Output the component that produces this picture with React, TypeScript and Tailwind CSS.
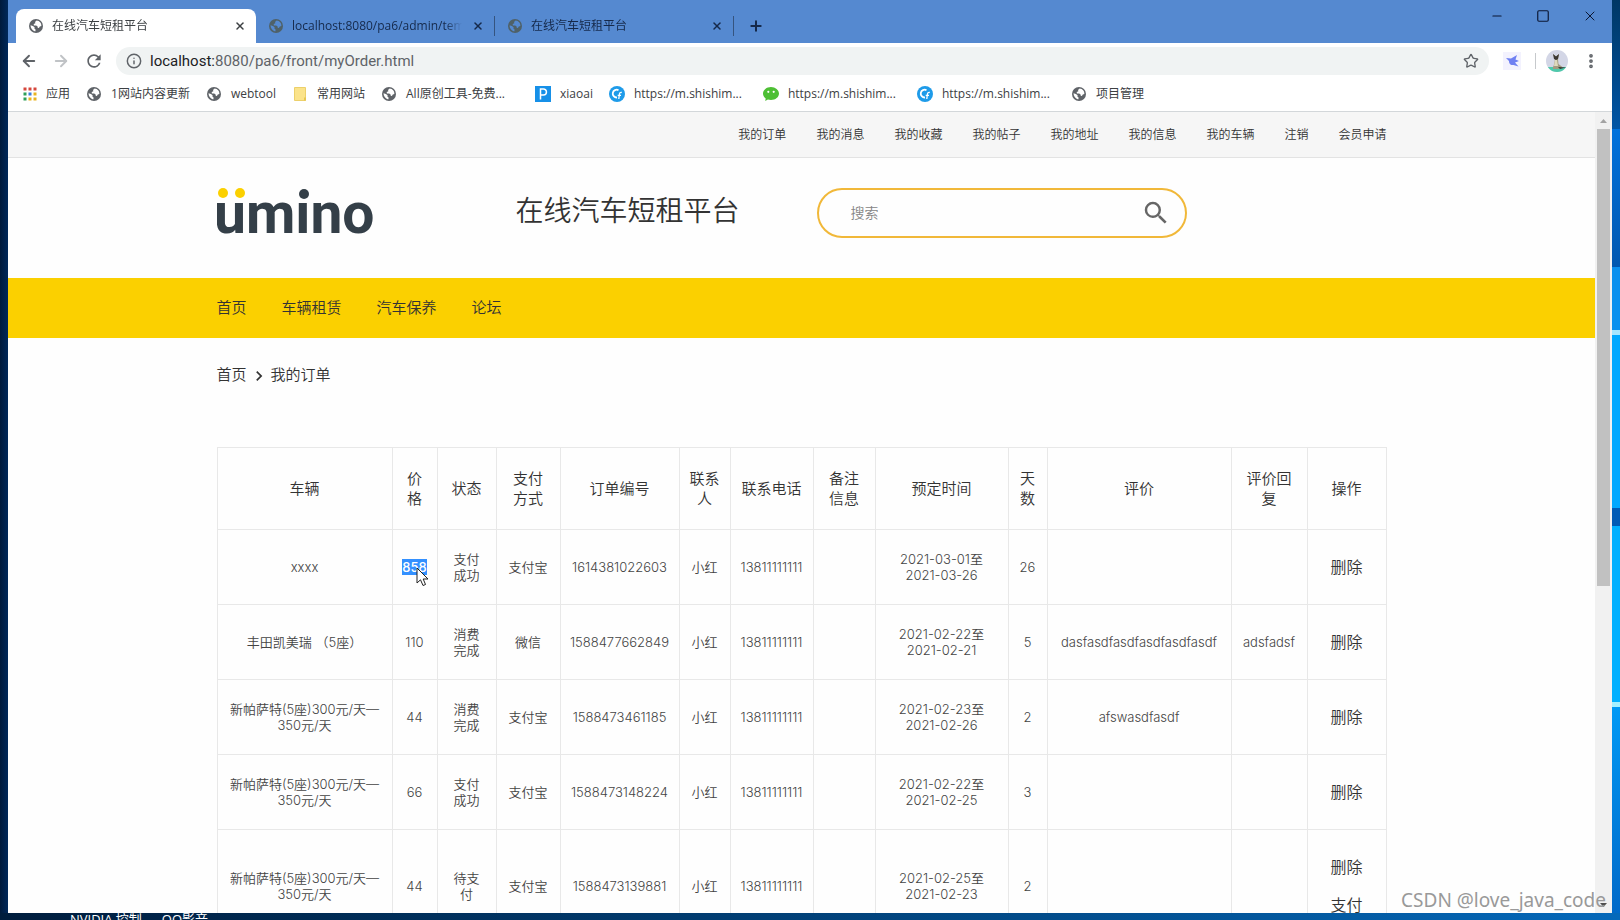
import type { ReactNode } from 'react';
import { ArrowLeft, ArrowRight, EllipsisVertical, Info, Minus, Plus, Square, Star, X } from 'lucide-react';
import { MdChevronRight, MdRefresh, MdSearch } from 'react-icons/md';

interface Bookmark {
    label: string;
    icon: ReactNode;
    wide?: boolean;
}

interface Order {
    car: string;
    price: string;
    status: string;
    payment: string;
    orderNo: string;
    contact: string;
    phone: string;
    remark: string;
    dates: [string, string];
    days: string;
    review: string;
    reply: string;
    actions: string[];
    selected?: boolean;
}

const topLinks = ['我的订单', '我的消息', '我的收藏', '我的帖子', '我的地址', '我的信息', '我的车辆', '注销', '会员申请'];

const navLinks = ['首页', '车辆租赁', '汽车保养', '论坛'];

const columns = [
    { title: '车辆', width: 'w-[175px]' },
    { title: '价格', width: 'w-[45px]' },
    { title: '状态', width: 'w-[59px]' },
    { title: '支付方式', width: 'w-[64px]' },
    { title: '订单编号', width: 'w-[119px]' },
    { title: '联系人', width: 'w-[51px]' },
    { title: '联系电话', width: 'w-[83px]' },
    { title: '备注信息', width: 'w-[62px]' },
    { title: '预定时间', width: 'w-[133px]' },
    { title: '天数', width: 'w-[39px]' },
    { title: '评价', width: 'w-[184px]' },
    { title: '评价回复', width: 'w-[76px]' },
    { title: '操作', width: 'w-[79px]' },
];

const passat = '新帕萨特(5座)300元/天—350元/天';

const orders: Order[] = [
    { car: 'xxxx', price: '858', status: '支付成功', payment: '支付宝', orderNo: '1614381022603', contact: '小红', phone: '13811111111', remark: '', dates: ['2021-03-01', '2021-03-26'], days: '26', review: '', reply: '', actions: ['删除'], selected: true },
    { car: '丰田凯美瑞 （5座）', price: '110', status: '消费完成', payment: '微信', orderNo: '1588477662849', contact: '小红', phone: '13811111111', remark: '', dates: ['2021-02-22', '2021-02-21'], days: '5', review: 'dasfasdfasdfasdfasdfasdf', reply: 'adsfadsf', actions: ['删除'] },
    { car: passat, price: '44', status: '消费完成', payment: '支付宝', orderNo: '1588473461185', contact: '小红', phone: '13811111111', remark: '', dates: ['2021-02-23', '2021-02-26'], days: '2', review: 'afswasdfasdf', reply: '', actions: ['删除'] },
    { car: passat, price: '66', status: '支付成功', payment: '支付宝', orderNo: '1588473148224', contact: '小红', phone: '13811111111', remark: '', dates: ['2021-02-22', '2021-02-25'], days: '3', review: '', reply: '', actions: ['删除'] },
    { car: passat, price: '44', status: '待支付', payment: '支付宝', orderNo: '1588473139881', contact: '小红', phone: '13811111111', remark: '', dates: ['2021-02-25', '2021-02-23'], days: '2', review: '', reply: '', actions: ['删除', '支付'] },
];

function Globe({ dim = false }: { dim?: boolean }) {
    return (
        <svg viewBox="0 0 16 16" className="size-4 shrink-0" aria-hidden="true">
            <circle cx="8" cy="8" r="7" fill={dim ? '#4f6168' : '#5f6368'} />
            <path
                d="M8.6 2.6 7 4l.4 1.2-1.7.9.2 1.3h2.3l1.4 1 .1 1.4 1.2.2.9-1.6 1.6-.3c.1-3.2-1.7-5.3-4.8-5.5ZM2.5 7.3c0 2.9 1.7 5.2 4.7 6.1l.5-1.6-1.3-1.4.2-1.2-1.7-1.1-2.4-.8Z"
                fill={dim ? '#5589d0' : '#ffffff'}
            />
        </svg>
    );
}

function AppsGrid() {
    const colors = ['#d5473c', '#d5473c', '#d5473c', '#2f9e58', '#3b7ddd', '#e9b320', '#2f9e58', '#e9b320', '#e9b320'];
    return (
        <svg viewBox="0 0 14 14" className="size-3.5 shrink-0" aria-hidden="true">
            {colors.map((color, i) => (
                <rect key={i} x={(i % 3) * 5 + 0.5} y={Math.floor(i / 3) * 5 + 0.5} width="3" height="3" fill={color} />
            ))}
        </svg>
    );
}

function Folder() {
    return (
        <svg viewBox="0 0 16 16" className="size-4 shrink-0" aria-hidden="true">
            <path d="M2.5 1.5h11v13h-11z" fill="#fbe38a" stroke="#ecd06b" />
            <path d="M12 11.5h2v3h-2z" fill="#e8c64f" />
        </svg>
    );
}

function SquareP() {
    return (
        <svg viewBox="0 0 16 16" className="size-4 shrink-0" aria-hidden="true">
            <path d="M0 0h16v16H0z" fill="#1690e8" />
            <path d="M5.5 13.5V3h3a2.9 2.9 0 0 1 0 5.9h-3" fill="none" stroke="#fff" strokeWidth="1.5" />
        </svg>
    );
}

function RoundC() {
    return (
        <svg viewBox="0 0 16 16" className="size-4 shrink-0" aria-hidden="true">
            <circle cx="8" cy="8" r="8" fill="#1e9be9" />
            <path d="M9.5 4.2A3.9 3.9 0 1 0 8 11.5" fill="none" stroke="#fff" strokeWidth="1.8" />
            <path d="M12.8 6.5c-2-.3-2.3.6-2.5 2.5L9.8 13M8.7 9.3h3.3" fill="none" stroke="#fff" strokeWidth="1.3" />
        </svg>
    );
}

function ChatBubble() {
    return (
        <svg viewBox="0 0 16 16" className="size-4 shrink-0" aria-hidden="true">
            <path d="M8 1C3.6 1 0 3.9 0 7.6c0 2 1.1 3.7 2.7 4.9L2.2 15l2.7-1.4c1 .3 2 .5 3.1.5 4.4 0 8-2.9 8-6.5S12.4 1 8 1Z" fill="#4dbf34" />
            <circle cx="5.3" cy="5.8" r="1.1" fill="#fff" />
            <circle cx="10.7" cy="5.8" r="1.1" fill="#fff" />
        </svg>
    );
}

function Bird() {
    return (
        <svg viewBox="0 0 18 18" className="size-[18px]" aria-hidden="true">
            <path d="M0 0h18v18H0z" fill="#f3f2fe" />
            <path d="m3 6 5 .5L14 3l-1.5 4.5L16 9l-4 1.5 3.5 4-5-1.5C7 13.5 6 11 6 9Z" fill="#6f80f2" />
        </svg>
    );
}

function Avatar() {
    return (
        <svg viewBox="0 0 22 22" className="size-[22px]" aria-hidden="true">
            <clipPath id="avatar-clip">
                <circle cx="11" cy="11" r="11" />
            </clipPath>
            <g clipPath="url(#avatar-clip)">
                <path d="M0 0h22v22H0z" fill="#d3d6e6" />
                <path d="M0 17h22v5H0z" fill="#4fc9ab" />
                <path d="M7 17c1-1 1.5-5 2-8L7 4l3 2.5L13 4l-1 5 .5 5 4.5 3.5-5 1.5H7Z" fill="#a39b80" />
                <path d="m7 4 3 2.5L13 4l-1 5-2 1-2-1ZM12 17l8 .5-6 1.5Z" fill="#3a3733" />
                <path d="M9 10h2l1 6H8Z" fill="#ded9bd" />
            </g>
        </svg>
    );
}

function Logo() {
    return (
        <svg width="158" height="56" viewBox="0 0 158 56" role="img" aria-label="ümino">
            {/* The letters fade out above the x-height, the round dots are drawn on their own */}
            <linearGradient id="logo-fill" gradientUnits="userSpaceOnUse" x1="0" y1="0" x2="0" y2="56">
                <stop offset="0.22" stopColor="#343f48" stopOpacity="0" />
                <stop offset="0.22" stopColor="#343f48" />
            </linearGradient>
            <text x="-3" y="45" fontFamily="Roboto, sans-serif" fontSize="57" fontWeight="700" fill="url(#logo-fill)">
                ümino
            </text>
            <circle cx="6" cy="5" r="5" fill="#fbd000" />
            <circle cx="23" cy="5" r="5" fill="#fbd000" />
            <circle cx="87" cy="6" r="5" fill="#343f48" />
        </svg>
    );
}

function Pointer() {
    return (
        <svg viewBox="0 0 14 20" className="absolute top-2 left-3.5 h-5 w-3.5" aria-hidden="true">
            <path d="M1 1v15l3.5-3.2L7 18.5l2.5-1L7.2 12H12Z" fill="#fff" stroke="#222" />
        </svg>
    );
}

const bookmarks: Bookmark[] = [
    { label: '应用', icon: <AppsGrid /> },
    { label: '1网站内容更新', icon: <Globe /> },
    { label: 'webtool', icon: <Globe /> },
    { label: '常用网站', icon: <Folder /> },
    { label: 'All原创工具-免费...', icon: <Globe />, wide: true },
    { label: 'xiaoai', icon: <SquareP /> },
    { label: 'https://m.shishim...', icon: <RoundC />, wide: true },
    { label: 'https://m.shishim...', icon: <ChatBubble />, wide: true },
    { label: 'https://m.shishim...', icon: <RoundC />, wide: true },
    { label: '项目管理', icon: <Globe /> },
];

function BrowserTab({ title, active = false }: { title: string; active?: boolean }) {
    return (
        <div
            className={`flex h-[34px] items-center gap-2 pr-2 pl-3 text-xs ${active
                ? 'w-60 rounded-t-lg bg-white text-[#3c4043]'
                : 'w-[238px] text-[#15294a]'
                }`}
        >
            <Globe dim={!active} />
            <span className="flex-1 overflow-hidden mask-r-from-90% whitespace-nowrap">{title}</span>
            <button type="button" aria-label="关闭标签页" className="p-0.5">
                <X className="size-3" strokeWidth={3} />
            </button>
        </div>
    );
}

function BrowserChrome() {
    return (
        <header className="shrink-0 border-b border-[#d3d7da] bg-white font-['Open_Sans','Noto_Sans_CJK_SC',sans-serif]">
            <div className="flex h-[43px] items-end justify-between bg-[#5589d0]">
                <div className="flex items-center pl-2">
                    <BrowserTab title="在线汽车短租平台" active />
                    <div className="flex items-center">
                        <BrowserTab title="localhost:8080/pa6/admin/tem" />
                        <span className="h-5 w-px bg-[#35547f]" />
                        <BrowserTab title="在线汽车短租平台" />
                        <span className="h-5 w-px bg-[#35547f]" />
                    </div>
                    <button type="button" aria-label="新标签页" className="ml-3.5 text-[#15294a]">
                        <Plus className="size-4" strokeWidth={3} />
                    </button>
                </div>
                <div className="flex gap-8 self-start pt-2 pr-3.5 text-[#0b1733]">
                    <button type="button" aria-label="最小化"><Minus className="size-3.5" strokeWidth={2} /></button>
                    <button type="button" aria-label="最大化"><Square className="size-3.5" strokeWidth={2} /></button>
                    <button type="button" aria-label="关闭"><X className="size-4" strokeWidth={1.5} /></button>
                </div>
            </div>

            {/* Address bar */}
            <div className="flex h-9 items-center text-[#5f6368]">
                <div className="flex items-center gap-3.5 px-3">
                    <button type="button" aria-label="后退"><ArrowLeft className="size-[18px]" strokeWidth={2.5} /></button>
                    <button type="button" aria-label="前进" className="text-[#c0c3c6]"><ArrowRight className="size-[18px]" strokeWidth={2.5} /></button>
                    <button type="button" aria-label="重新加载"><MdRefresh className="size-5" /></button>
                </div>
                <div className="flex h-7 flex-1 items-center gap-2 rounded-full bg-[#f0f3f3] px-2.5">
                    <Info className="size-4" strokeWidth={2.2} />
                    <a href="#" className="flex-1 font-[Roboto,sans-serif] text-[15px]">
                        <span className="text-[#202124]">localhost:</span>8080/pa6/front/myOrder.html
                    </a>
                    <button type="button" aria-label="为此网页添加书签"><Star className="size-4" /></button>
                </div>
                <div className="flex items-center gap-2.5 pr-3 pl-3.5">
                    <Bird />
                    <span className="ml-1 h-4 w-px bg-[#c6c9cc]" />
                    <Avatar />
                    <button type="button" aria-label="自定义及控制" className="ml-1"><EllipsisVertical className="size-[18px]" strokeWidth={3} /></button>
                </div>
            </div>

            {/* Bookmarks bar */}
            <nav className="flex h-8 items-center gap-4 px-[15px] pb-0.5 text-xs text-[#3c4043]">
                {bookmarks.map((bookmark, i) => (
                    <a key={i} href="#" className="flex items-center gap-[9px] whitespace-nowrap">
                        {bookmark.icon}
                        <span className={bookmark.wide ? 'w-[113px]' : ''}>{bookmark.label}</span>
                    </a>
                ))}
            </nav>
        </header>
    );
}

function OrderRow({ order }: { order: Order }) {
    const cell = 'border border-[#e8e8e8] px-2';
    return (
        <tr className="h-[75px]">
            <td className={cell}>{order.car}</td>
            <td className={cell}>
                {order.selected ? (
                    <span className="relative inline-block bg-[#3390ff] font-medium text-white">
                        {order.price}
                        <Pointer />
                    </span>
                ) : order.price}
            </td>
            <td className={`${cell} px-4`}>{order.status}</td>
            <td className={cell}>{order.payment}</td>
            <td className={cell}>{order.orderNo}</td>
            <td className={cell}>{order.contact}</td>
            <td className={cell}>{order.phone}</td>
            <td className={cell}>{order.remark}</td>
            <td className={cell}>
                {order.dates[0]}至<br />{order.dates[1]}
            </td>
            <td className={cell}>{order.days}</td>
            <td className={cell}>{order.review}</td>
            <td className={cell}>{order.reply}</td>
            <td className={`${cell} py-[18px] text-base text-[#333]`}>
                {order.actions.map(action => (
                    <a key={action} href="#" className="block leading-[38px]">{action}</a>
                ))}
            </td>
        </tr>
    );
}

function Scrollbar() {
    return (
        <div className="flex w-[17px] shrink-0 flex-col items-center bg-[#f1f1f1]" aria-hidden="true">
            <svg viewBox="0 0 17 17" className="size-[17px]"><path d="m5 11 3.5-4 3.5 4Z" fill="#a3a3a3" /></svg>
            <div className="h-[57%] w-[13px] bg-[#c1c1c1]" />
            <svg viewBox="0 0 17 17" className="mt-auto size-[17px]"><path d="m5 7 3.5 4L12 7Z" fill="#505050" /></svg>
        </div>
    );
}

function SitePage() {
    return (
        <main className="min-w-0 flex-1 overflow-hidden bg-[#fefefe] font-[Inter,'Noto_Sans_CJK_SC',sans-serif] font-[350] text-[#333]">
            <div className="border-b border-[#e3e3e3] bg-[#f6f6f6]">
                <nav className="mx-auto flex h-[45px] max-w-[1170px] items-center justify-end gap-[30px] text-xs">
                    {topLinks.map(link => <a key={link} href="#">{link}</a>)}
                </nav>
            </div>

            <div className="mx-auto flex h-[120px] max-w-[1170px] items-start pt-[30px]">
                <a href="#" className="w-[299px]"><Logo /></a>
                <h1 className="w-[301px] text-[28px] leading-[46px]">在线汽车短租平台</h1>
                <form className="flex h-[50px] w-[370px] items-center rounded-full border-2 border-[#f1b839] pr-3.5 pl-8" onSubmit={e => e.preventDefault()}>
                    <input type="text" aria-label="搜索" placeholder="搜索" className="min-w-0 flex-1 text-sm outline-none placeholder:text-[#858585]" />
                    <button type="submit" aria-label="搜索"><MdSearch className="size-[30px] text-[#666]" /></button>
                </form>
            </div>

            <div className="bg-[#fbd000]">
                <nav className="mx-auto flex h-[60px] max-w-[1170px] items-center gap-[35px] text-[15px]">
                    {navLinks.map(link => <a key={link} href="#">{link}</a>)}
                </nav>
            </div>

            <div className="mx-auto max-w-[1170px]">
                <div className="flex h-[109px] items-start gap-0.5 pt-[26px] text-[15px]">
                    <a href="#">首页</a>
                    <MdChevronRight className="mt-0.5 size-5" />
                    <span>我的订单</span>
                </div>

                <table className="w-full table-fixed border-collapse text-center text-[13px] leading-4 text-[#444]">
                    <colgroup>
                        {columns.map(column => <col key={column.title} className={column.width} />)}
                    </colgroup>
                    <thead>
                        <tr className="h-[82px] text-[15px] leading-5 text-[#333]">
                            {columns.map(column => (
                                <th key={column.title} className="border border-[#e8e8e8] px-2.5 font-[350]">{column.title}</th>
                            ))}
                        </tr>
                    </thead>
                    <tbody>
                        {orders.map(order => <OrderRow key={order.orderNo} order={order} />)}
                    </tbody>
                </table>
            </div>
        </main>
    );
}

export default function App() {
    return (
        <div className="relative flex h-screen flex-col overflow-hidden bg-linear-to-r from-[#001d3d] to-[#0569ba]">
            <div className="flex min-h-0 flex-1">
                <div className="w-2 shrink-0 bg-linear-to-r from-[#001a3b] to-[#00285a]" />
                <div className="flex min-w-0 flex-1 flex-col">
                    <BrowserChrome />
                    <div className="flex min-h-0 flex-1">
                        <SitePage />
                        <Scrollbar />
                    </div>
                </div>
                {/* Strip of desktop wallpaper on the right */}
                <div className="flex w-2 shrink-0 flex-col">
                    <div className="flex-[129] bg-linear-to-b from-[#003765] to-[#0055a5]" />
                    <div className="flex-[138] bg-linear-to-b from-[#0072dc] to-[#0057b0]" />
                    <div className="flex-[63] bg-[#0a90ee]" />
                    <div className="flex-[5] bg-[#a5e6ff]" />
                    <div className="flex-[173] bg-[#00a8ff]" />
                    <div className="flex-[18] bg-[#005bb5]" />
                    <div className="flex-[176] bg-[#00b0ff]" />
                    <div className="flex-[5] bg-[#a5f0ff]" />
                    <div className="flex-[206] bg-linear-to-b from-[#0099f5] to-[#0069c8]" />
                </div>
            </div>

            {/* Desktop icon labels peeking out below the window */}
            <div className="flex h-[7px] shrink-0 gap-5 overflow-hidden pl-[70px] font-['Open_Sans','Noto_Sans_CJK_SC',sans-serif] text-[13px] leading-3 text-white">
                <span>NVIDIA 控制</span>
                <span>QQ影音</span>
            </div>

            <p className="absolute right-3.5 bottom-1.5 font-['Noto_Sans',sans-serif] text-[19px] text-[#999]">CSDN @love_java_code</p>
        </div>
    );
}
